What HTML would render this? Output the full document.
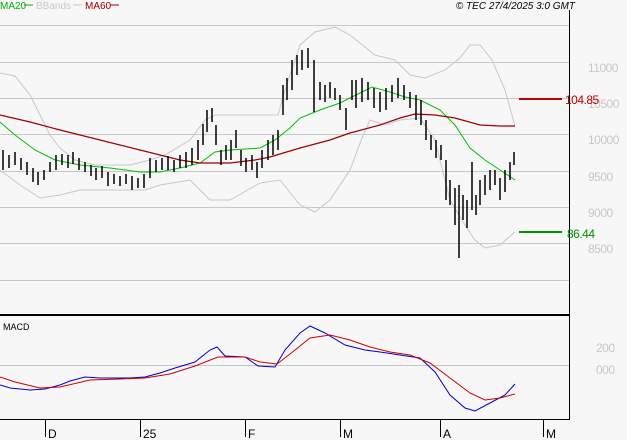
<!DOCTYPE html>
<html><head><meta charset="utf-8"><style>
html,body{margin:0;padding:0;background:#f7f7f7;}
svg{display:block;font-family:"Liberation Sans",sans-serif;}
</style></head><body>
<svg width="627" height="440" viewBox="0 0 627 440" xmlns="http://www.w3.org/2000/svg">
<rect width="627" height="440" fill="#f7f7f7"/>
<g stroke="#c8c8c8" stroke-width="1">
<line x1="0" y1="25.5" x2="569" y2="25.5"/>
<line x1="0" y1="62.5" x2="569" y2="62.5"/>
<line x1="0" y1="98.5" x2="569" y2="98.5"/>
<line x1="0" y1="134.5" x2="569" y2="134.5"/>
<line x1="0" y1="171.5" x2="569" y2="171.5"/>
<line x1="0" y1="207.5" x2="569" y2="207.5"/>
<line x1="0" y1="243.5" x2="569" y2="243.5"/>
<line x1="0" y1="280.5" x2="569" y2="280.5"/>
<line x1="0" y1="365.5" x2="569" y2="365.5"/>
</g>
<line x1="569.5" y1="10" x2="569.5" y2="420" stroke="#000"/>
<line x1="0" y1="315" x2="570" y2="315" stroke="#000" stroke-width="2"/>
<line x1="0" y1="419.5" x2="570" y2="419.5" stroke="#000"/>
<g stroke="#000"><line x1="45.5" y1="419" x2="45.5" y2="437"/><line x1="140.5" y1="419" x2="140.5" y2="437"/><line x1="245.5" y1="419" x2="245.5" y2="437"/><line x1="340.5" y1="419" x2="340.5" y2="437"/><line x1="440.5" y1="419" x2="440.5" y2="437"/><line x1="543.5" y1="419" x2="543.5" y2="437"/></g>
<g font-size="12" fill="#000"><text x="48" y="438">D</text><text x="143" y="438">25</text><text x="248" y="438">F</text><text x="343" y="438">M</text><text x="443" y="438">A</text><text x="546" y="438">M</text></g>
<g font-size="12" fill="#c8c8c8" letter-spacing="-0.5"><text x="588" y="72">11000</text><text x="588" y="108">10500</text><text x="588" y="144">10000</text><text x="588" y="181">9500</text><text x="588" y="217">9000</text><text x="588" y="253">8500</text><text x="596" y="352">200</text><text x="596" y="374">000</text></g>
<line x1="519" y1="99" x2="562" y2="99" stroke="#c00000" stroke-width="2"/>
<text x="565" y="104" font-size="12" fill="#c00000" letter-spacing="-0.5">104.85</text>
<line x1="519" y1="232" x2="562" y2="232" stroke="#009000" stroke-width="2"/>
<text x="567" y="238" font-size="12" fill="#009000" letter-spacing="-0.5">86.44</text>
<text x="0" y="9" font-size="10" fill="#00b000">MA20</text><line x1="24" y1="5" x2="33" y2="5" stroke="#00b000"/>
<text x="36" y="9" font-size="10" fill="#c8c8c8">BBands</text><line x1="73" y1="5" x2="82" y2="5" stroke="#c8c8c8"/>
<text x="85" y="9" font-size="10" fill="#a00000">MA60</text><line x1="110" y1="5" x2="119" y2="5" stroke="#a00000"/>
<text x="575" y="9" font-size="10" fill="#000" font-style="italic" text-anchor="end">© TEC 27/4/2025 3:0 GMT</text>
<text x="3" y="330" font-size="9" fill="#000">MACD</text>
<g fill="none" stroke-width="1">
<polyline stroke="#c8c8c8" points="0,73 15,76 30,95 40,115 50,135 60,148 75,160 95,165 130,165 150,160 165,155 190,140 205,120 215,115 230,115 278,115 285,90 300,45 315,32 335,27 350,35 375,55 395,60 410,75 425,78 445,70 460,58 470,45 480,45 492,60 505,90 515,126"/>
<polyline stroke="#c8c8c8" points="0,170 20,185 40,198 60,195 80,190 110,190 145,190 160,185 190,180 210,200 230,200 260,183 280,180 300,205 315,212 330,200 350,170 362,138 370,120 385,125 400,120 420,118 435,140 450,200 465,225 475,240 485,248 500,245 515,232"/>
<polyline stroke="#00c000" points="0,122 15,135 35,150 55,160 80,165 110,168 140,172 160,172 180,168 200,163 215,152 230,150 260,148 275,140 290,128 300,118 320,110 340,103 360,93 372,87 390,92 405,97 420,100 440,110 455,125 470,148 485,160 500,170 515,180"/>
<polyline stroke="#a00000" stroke-width="1.2" points="0,115 30,122 60,130 100,140 140,150 180,160 200,163 230,163 255,160 270,157 300,148 330,140 350,133 380,125 400,118 415,114 435,115 455,118 480,125 500,126 515,126"/>
<polyline stroke="#0000d0" points="0,385 10,388 30,390 45,389 60,385 70,381 85,377 100,378 130,378 145,377 160,373 175,368 195,362 210,350 217,347 225,356 245,357 258,366 275,367 285,350 300,333 310,326 325,333 345,345 365,350 380,352 400,355 420,358 435,372 450,395 465,408 475,411 490,403 505,395 515,384"/>
<polyline stroke="#d00000" points="0,377 15,382 40,388 60,387 90,380 120,379 145,378 170,374 195,366 218,357 245,357 260,362 277,364 290,354 310,338 330,335 350,340 370,347 390,352 410,355 430,363 450,378 470,393 485,400 500,398 515,394"/>
</g>
<g stroke="#000" stroke-width="1.5">
<path d="M3 150V170M9 155V168M15 152V165M21 158V170M27 162V175M33 168V182M38 172V185M44 170V180M50 162V172M56 155V170M62 154V165M68 155V168M73 152V164M79 158V170M85 162V172M91 165V176M96 168V180M102 166V178M108 172V186M114 174V184M120 176V186M126 174V184M132 176V190M138 178V188M144 174V188M150 158V178M156 160V172M162 158V170M168 156V170M174 160V172M180 155V168M186 152V168M192 148V165M198 140V160M203 124V145M207 110V132M212 108V122M216 125V145M221 150V165M226 145V160M231 140V160M236 130V148M241 150V166M246 158V172M252 155V170M257 162V178M262 150V168M268 140V160M273 135V155M278 130V150M283 85V115M287 78V100M292 60V90M297 55V75M302 50V70M308 48V68M314 60V112M320 82V100M325 85V102M330 82V98M335 88V100M340 95V110M346 108V130M352 80V100M356 80V108M362 78V102M368 82V100M374 88V108M380 92V112M386 88V110M392 85V102M398 78V98M404 85V100M410 92V108M416 95V120M421 100V125M426 120V140M431 135V150M436 140V158M441 145V160M446 160V200M450 180V205M455 188V225M459 185V258M463 195V220M467 200V228M472 162V210M476 195V215M480 180V205M485 175V195M490 170V190M495 170V185M500 178V200M505 170V192M510 162V180M514 152V165"/>
</g>
</svg>
</body></html>
